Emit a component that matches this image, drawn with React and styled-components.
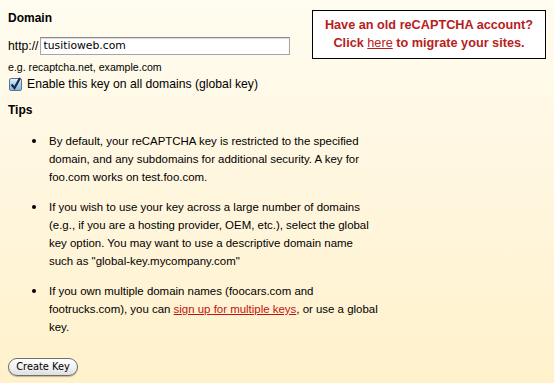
import React from "react";
import styled, { createGlobalStyle } from "styled-components";

const Global = createGlobalStyle`
  html, body { margin: 0; padding: 0; }
  body {
    width: 554px;
    min-height: 383px;
    background: linear-gradient(to bottom, #fffcf0 0%, #fff6de 50%, #fff1cb 100%);
    font-family: "Liberation Sans", Arial, sans-serif;
    color: #000;
  }
`;

const Page = styled.div`
  padding: 8px;
  height: 383px;
  box-sizing: border-box;
`;

const Top = styled.div`
  display: flex;
  justify-content: space-between;
  align-items: flex-start;
`;

const Form = styled.div`
  display: flex;
  flex-direction: column;
`;

const Heading = styled.div`
  font-size: 12px;
  font-weight: bold;
  line-height: 16px;
  margin-top: ${(p) => p.$top}px;
`;

const Row = styled.div`
  display: flex;
  align-items: center;
  margin-top: ${(p) => p.$top || 0}px;
  font-size: 12.2px;
  line-height: 18px;
`;

const Prefix = styled.span`
  margin-right: 1px;
`;

const Input = styled.div`
  width: 250px;
  height: 18px;
  box-sizing: border-box;
  background: #fff;
  border: 1px solid #a5a5a5;
  border-top-color: #8a8a8a;
  box-shadow: inset 0 1px 1px rgba(0, 0, 0, 0.15);
  font-family: "DejaVu Sans", sans-serif;
  font-size: 10.8px;
  line-height: 16px;
  padding-left: 3px;
`;

const Hint = styled.div`
  font-size: 10.6px;
  line-height: 14px;
  margin-top: 5px;
`;

const Check = styled.span`
  width: 13px;
  height: 13px;
  box-sizing: border-box;
  margin-left: 1px;
  margin-right: 5px;
  border: 1px solid #5a7590;
  border-radius: 2px;
  background: linear-gradient(to bottom, #e2f1fc 0%, #a9d0f0 50%, #86bbe8 100%);
  display: flex;
  align-items: center;
  justify-content: center;
  overflow: visible;
`;

const Notice = styled.div`
  margin-top: 2px;
  width: 234px;
  box-sizing: border-box;
  border: 1px solid #000;
  background: #fff;
  padding: 5px 0 6px;
  text-align: center;
  font-size: 12.7px;
  font-weight: bold;
  line-height: 18px;
  color: #b8201c;
`;

const NoticeLink = styled.a`
  font-weight: normal;
  color: #b8201c;
  text-decoration: underline;
`;

const List = styled.ul`
  list-style: none;
  margin: 14px 0 0;
  padding: 0;
`;

const Item = styled.li`
  display: flex;
  font-size: 11.45px;
  line-height: 18px;
  & + & {
    margin-top: 12px;
  }
`;

const Dot = styled.span`
  flex: none;
  width: 4px;
  height: 4px;
  border-radius: 50%;
  background: #000;
  margin: 7px 13px 0 24px;
`;

const Text = styled.span`
  width: 380px;
`;

const RedLink = styled.a`
  color: #c4120e;
  text-decoration: underline;
`;

const Button = styled.button`
  display: block;
  margin-top: 22px;
  width: 70px;
  height: 18px;
  padding: 0;
  border: 1px solid #6e6e6e;
  border-radius: 9px;
  background: linear-gradient(to bottom, #ffffff 0%, #f2f2f2 50%, #dedede 100%);
  box-shadow: 0 1px 1px rgba(0, 0, 0, 0.25);
  font-family: "DejaVu Sans", sans-serif;
  font-size: 9.8px;
  line-height: 16px;
  color: #000;
`;

export default function App() {
  return (
    <>
      <Global />
      <Page>
        <Top>
          <Form>
            <Heading $top={2}>Domain</Heading>
            <Row $top={11}>
              <Prefix>http://</Prefix>
              <Input>tusitioweb.com</Input>
            </Row>
            <Hint>e.g. recaptcha.net, example.com</Hint>
            <Row $top={1}>
              <Check>
                <svg width="11" height="11" viewBox="0 0 11 11" style={{ overflow: "visible" }}>
                  <path d="M1.5 5.5 L4.5 9 L10 -1" fill="none" stroke="#1a2b44" strokeWidth="2.2" />
                </svg>
              </Check>
              Enable this key on all domains (global key)
            </Row>
          </Form>
          <Notice>
            Have an old reCAPTCHA account?
            <br />
            Click <NoticeLink href="#">here</NoticeLink> to migrate your sites.
          </Notice>
        </Top>
        <Heading $top={9}>Tips</Heading>
        <List>
          <Item>
            <Dot />
            <Text>
              By default, your reCAPTCHA key is restricted to the specified
              <br />
              domain, and any subdomains for additional security. A key for
              <br />
              foo.com works on test.foo.com.
            </Text>
          </Item>
          <Item>
            <Dot />
            <Text>
              If you wish to use your key across a large number of domains
              <br />
              (e.g., if you are a hosting provider, OEM, etc.), select the global
              <br />
              key option. You may want to use a descriptive domain name
              <br />
              such as "global-key.mycompany.com"
            </Text>
          </Item>
          <Item>
            <Dot />
            <Text>
              If you own multiple domain names (foocars.com and
              <br />
              footrucks.com), you can <RedLink href="#">sign up for multiple keys</RedLink>, or use a global
              <br />
              key.
            </Text>
          </Item>
        </List>
        <Button>Create Key</Button>
      </Page>
    </>
  );
}
